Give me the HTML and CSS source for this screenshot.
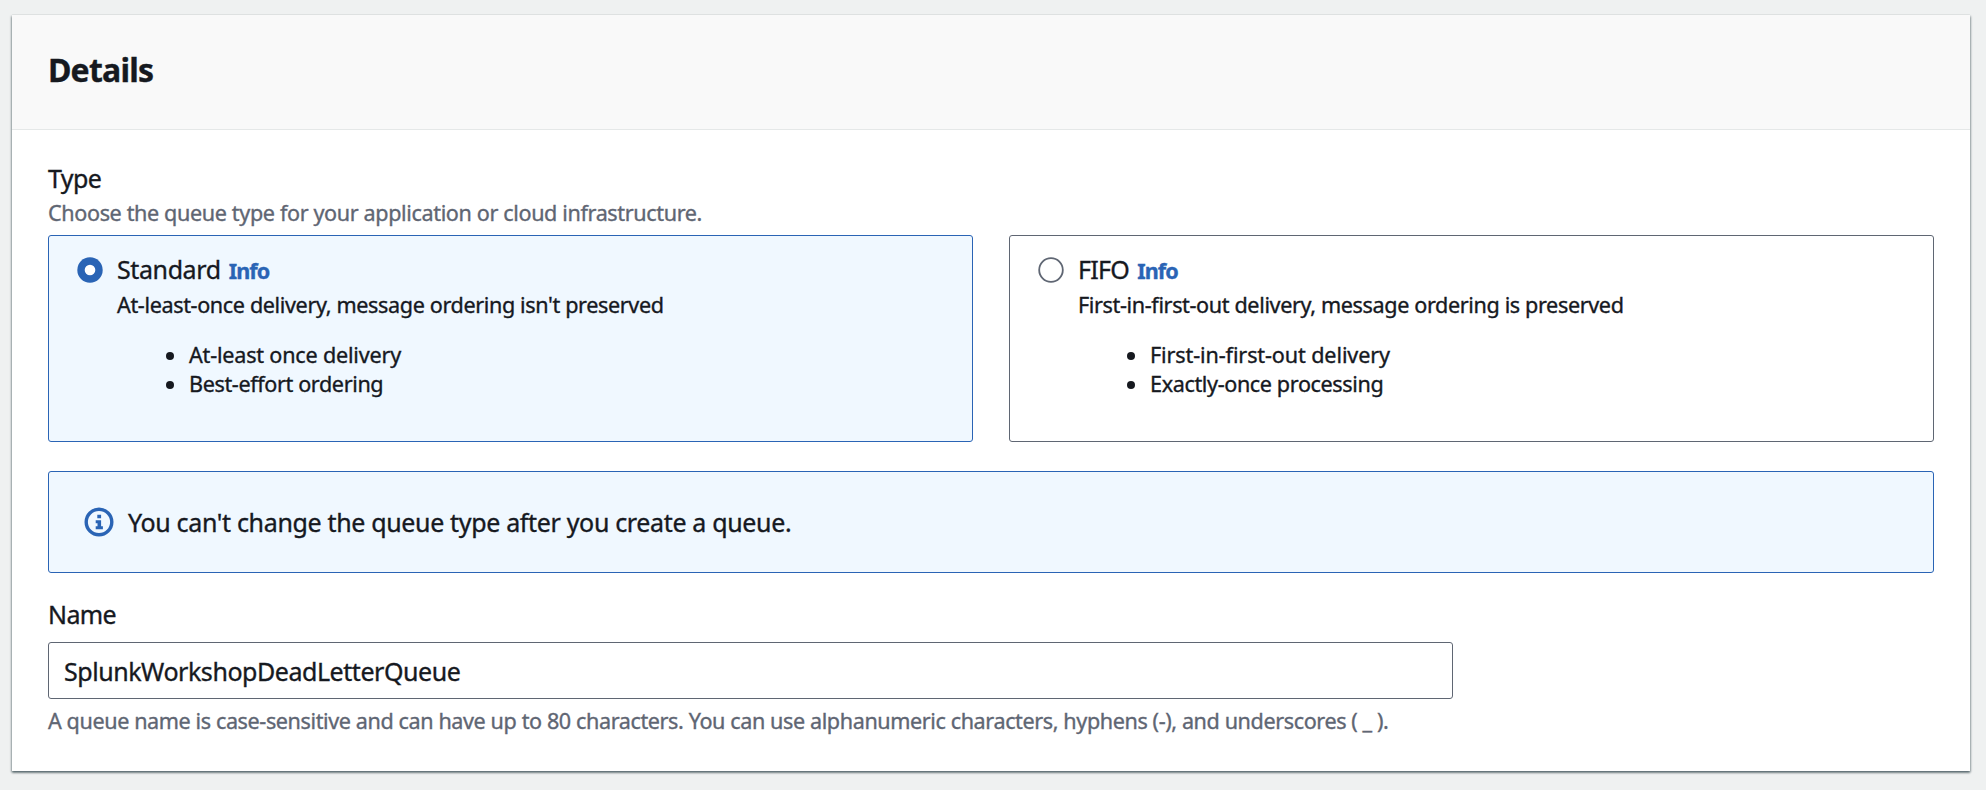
FILE: index.html
```html
<!DOCTYPE html>
<html lang="en">
<head>
<meta charset="utf-8">
<title>Create queue</title>
<link rel="stylesheet" href="styles.css">
</head>
<body>
<section class="panel">
  <header class="panel-header"><h2 class="panel-title">Details</h2></header>
  <div class="panel-body">
    <div class="label">Type</div>
    <div class="hint type-hint">Choose the queue type for your application or cloud infrastructure.</div>
    <div class="tiles">
      <div class="tile tile-selected">
        <svg class="radio" viewBox="0 0 26 26"><circle cx="13" cy="13" r="12.7" fill="#2a64b5"/><circle cx="13" cy="13" r="5.3" fill="#fff"/></svg>
        <div class="tile-content">
          <div class="tile-title"><span class="tile-name">Standard</span><a class="info">Info</a></div>
          <div class="tile-desc">At-least-once delivery, message ordering isn't preserved</div>
          <ul class="features">
            <li class="wide">At-least once delivery</li>
            <li>Best-effort ordering</li>
          </ul>
        </div>
      </div>
      <div class="tile">
        <svg class="radio" viewBox="0 0 26 26"><circle cx="13" cy="13" r="11.8" fill="#fff" stroke="#5f6673" stroke-width="1.8"/></svg>
        <div class="tile-content">
          <div class="tile-title"><span class="tile-name tile-name-caps">FIFO</span><a class="info">Info</a></div>
          <div class="tile-desc">First-in-first-out delivery, message ordering is preserved</div>
          <ul class="features">
            <li class="wider">First-in-first-out delivery</li>
            <li>Exactly-once processing</li>
          </ul>
        </div>
      </div>
    </div>
    <div class="alert">
      <svg class="alert-icon" viewBox="0 0 30 30"><circle cx="15" cy="15" r="12.8" fill="none" stroke="#2a64b5" stroke-width="3.4"/><path d="M13.3 7.7h3.8v3.5h-3.8zM11.7 13.2h5.4v6.1h1.8v3h-7.2v-3h1.8v-3h-1.8z" fill="#2a64b5"/></svg>
      <span>You can't change the queue type after you create a queue.</span>
    </div>
    <label class="label" for="name">Name</label>
    <input class="input" id="name" type="text" value="SplunkWorkshopDeadLetterQueue" spellcheck="false">
    <div class="hint">A queue name is case-sensitive and can have up to 80 characters. You can use alphanumeric characters, hyphens (-), and underscores ( _ ).</div>
  </div>
</section>
</body>
</html>
```

FILE: styles.css
```css
* { box-sizing: border-box; }

body {
  margin: 0;
  padding: 15px 16px 19px 12px;
  background: #eff1f1;
  color: #16191f;
  font: 400 25px/36px "Noto Sans", "Open Sans", sans-serif;
  -webkit-text-stroke-width: .35px;
}

.panel {
  height: 756px;
  background: #fff;
  box-shadow: 0 2px 2px 0 rgba(0, 28, 36, .4), 1px 1px 2px 0 rgba(0, 28, 36, .25), -1px 1px 2px 0 rgba(0, 28, 36, .25), 0 -1px 0 0 #e6e9e9;
}

.panel-header {
  height: 115px;
  padding: 35px 36px 0;
  background: #f9f9f9;
  border-bottom: 1px solid #e5e8e8;
}

.panel-title {
  margin: 0;
  font-size: 32px;
  font-weight: 700;
  line-height: 40px;
  letter-spacing: -.8px;
}

.panel-body { padding: 30px 36px 0; }

.label {
  display: block;
  line-height: 36px;
  letter-spacing: -.6px;
}

.hint {
  color: #5f6673;
  font-size: 21.6px;
  line-height: 28px;
  letter-spacing: -.4px;
}

.type-hint {
  margin: 3px 0 8px;
  letter-spacing: -.37px;
}

.tiles {
  display: grid;
  grid-template-columns: 1fr 1fr;
  gap: 36px;
}

.tile {
  display: flex;
  gap: 14px;
  height: 207px;
  padding: 15px 28px;
  border: 1px solid #5f6673;
  border-radius: 3px;
}

.tile-selected {
  background: #f0f8ff;
  border-color: #2a64b5;
}

.radio {
  flex: none;
  width: 26px;
  height: 26px;
  margin-top: 6px;
}

.tile-title {
  display: flex;
  align-items: baseline;
  gap: 8px;
}

.tile-name { letter-spacing: -.4px; }
.tile-name-caps { letter-spacing: -.7px; }

.info {
  color: #2a64b5;
  font-size: 21.6px;
  font-weight: 700;
  letter-spacing: -.9px;
}

.tile-desc {
  margin-top: 2px;
  font-size: 21.6px;
  line-height: 28px;
  letter-spacing: -.37px;
}

.features {
  margin: 21px 0 0;
  padding: 0 0 0 49px;
  list-style: none;
  font-size: 21.6px;
  line-height: 29px;
  letter-spacing: -.38px;
}

.features li {
  display: flex;
  align-items: center;
  gap: 15px;
}

.features .wide { letter-spacing: -.2px; }
.features .wider { letter-spacing: -.12px; }

.features li::before {
  content: "";
  width: 8px;
  height: 8px;
  margin-top: 3px;
  border-radius: 50%;
  background: #16191f;
}

.alert {
  display: flex;
  align-items: center;
  gap: 14px;
  height: 102px;
  margin: 29px 0 23px;
  padding: 0 35px 1px;
  background: #f0f8ff;
  border: 1px solid #2a64b5;
  border-radius: 3px;
  letter-spacing: -.34px;
}

.alert-icon {
  flex: none;
  width: 30px;
  height: 30px;
}

.input {
  display: block;
  width: 1405px;
  height: 57px;
  margin: 10px 0 8px;
  padding: 0 15px;
  border: 1px solid #5f6673;
  border-radius: 3px;
  background: #fff;
  color: inherit;
  font: inherit;
  letter-spacing: -.45px;
  outline: 0;
}
```
